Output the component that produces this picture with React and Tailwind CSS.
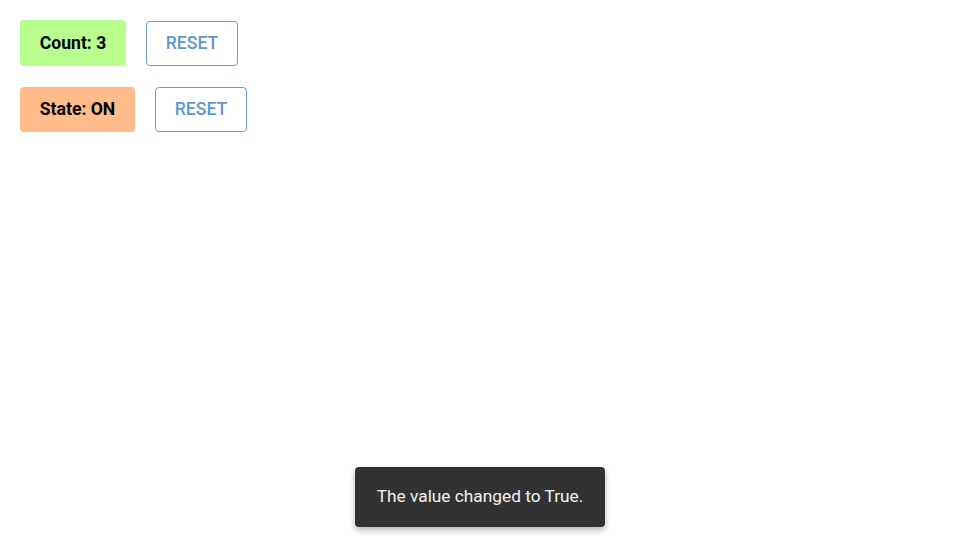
export default function App() {
  return (
    <div className="w-[960px] h-[540px] bg-white relative" style={{ fontFamily: "Roboto, 'Liberation Sans', sans-serif" }}>
      <div className="flex flex-col gap-[21px] p-5">
        <div className="flex items-center gap-5">
          <div className="w-[106px] h-[46px] flex items-center justify-center rounded bg-[#b8fd8d] text-black font-bold text-[17.6px]">Count: 3</div>
          <button className="w-[92px] h-[45px] flex items-center justify-center rounded border border-[#6a9ed3] text-[#5f98d0] font-medium text-[17.6px] bg-white">RESET</button>
        </div>
        <div className="flex items-center gap-5">
          <div className="w-[115px] h-[45px] flex items-center justify-center rounded bg-[#ffbb89] text-black font-bold text-[17.6px]">State: ON</div>
          <button className="w-[92px] h-[45px] flex items-center justify-center rounded border border-[#6a9ed3] text-[#5f98d0] font-medium text-[17.6px] bg-white">RESET</button>
        </div>
      </div>
      <div className="absolute left-[355px] top-[467px] w-[250px] h-[60px] flex items-center justify-center rounded bg-[#323232] text-[#f2f2f2] text-[17.3px] shadow-[0_3px_6px_rgba(0,0,0,0.3)]">The value changed to True.</div>
    </div>
  );
}
